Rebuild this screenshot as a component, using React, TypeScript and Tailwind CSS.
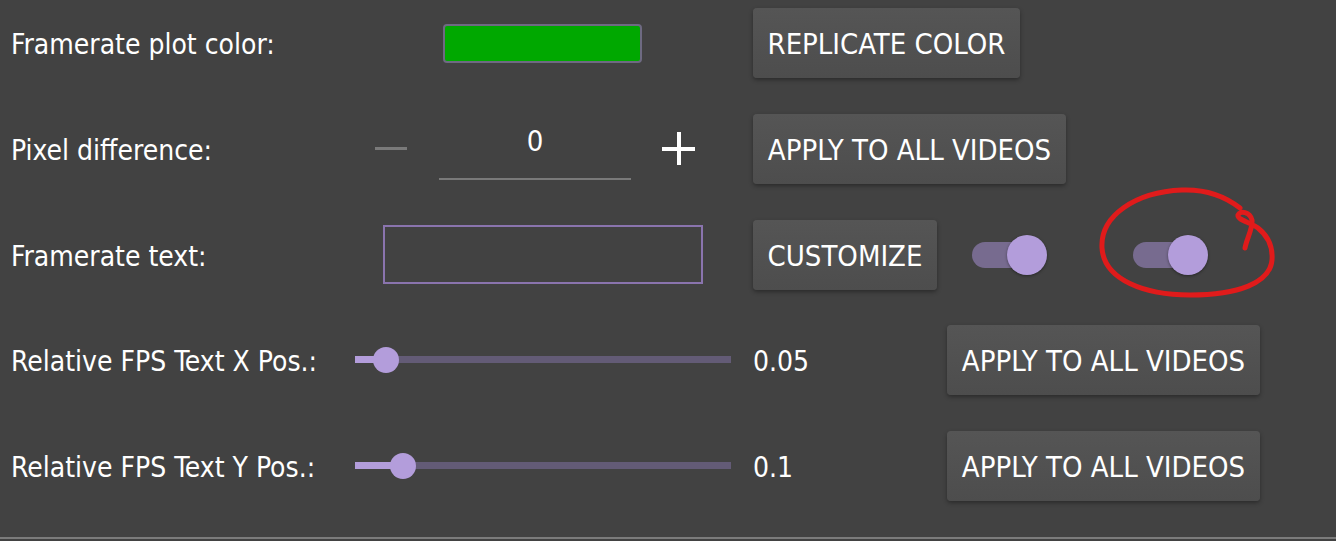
import React from "react";

const font = "font-['DejaVu_Sans_Condensed','DejaVu_Sans',sans-serif] font-stretch-condensed";

function Btn({ w, children }: { w: string; children: React.ReactNode }) {
  return (
    <div
      className={`${w} h-[70px] shrink-0 rounded-[4px] bg-gradient-to-b from-[#555555] to-[#4d4d4d] shadow-[0_2px_4px_rgba(0,0,0,0.35)] flex items-center justify-center pt-[3px] text-white text-[29px] leading-none`}
    >
      {children}
    </div>
  );
}

function Label({ w, children }: { w: string; children: React.ReactNode }) {
  return <div className={`${w} shrink-0 text-white text-[28px] leading-none pt-[4px]`}>{children}</div>;
}

function Toggle({ ml }: { ml: string }) {
  return (
    <div className={`relative ${ml} w-[75px] h-[40px] shrink-0`}>
      <div className="absolute left-0 top-[7px] w-[58px] h-[26px] rounded-full bg-[#776b8f]" />
      <div className="absolute right-0 top-0 w-[40px] h-[40px] rounded-full bg-[#b39ddb] shadow-[0_1px_3px_rgba(0,0,0,0.4)]" />
    </div>
  );
}

function Slider({ value }: { value: number }) {
  const pos = 13 + 350 * value;
  return (
    <div className="relative w-[376px] h-[26px] shrink-0">
      <div className="absolute left-0 right-0 top-[9px] h-[7px] bg-[#635b76]" />
      <div className="absolute left-0 top-[9px] h-[7px] bg-[#b39ddb]" style={{ width: pos }} />
      <div
        className="absolute top-0 w-[26px] h-[26px] rounded-full bg-[#b39ddb]"
        style={{ left: pos - 13 }}
      />
    </div>
  );
}

export default function App() {
  return (
    <div className={`relative w-[1336px] h-[541px] bg-[#424242] overflow-hidden ${font}`}>
      <div className="flex flex-col gap-[35.75px] pt-[8px] pl-[11px]">
        {/* Row 1 */}
        <div className="flex items-center h-[70px]">
          <Label w="w-[432px]">Framerate plot color:</Label>
          <div className="w-[199px] h-[39px] shrink-0 rounded-[4px] border-2 border-[#6e6a82] bg-[#00a800]" />
          <div className="w-[111px] shrink-0" />
          <Btn w="w-[267px]">REPLICATE COLOR</Btn>
        </div>
        {/* Row 2 */}
        <div className="flex items-center h-[70px]">
          <Label w="w-[364px]">Pixel difference:</Label>
          <div className="w-[32px] h-[3px] shrink-0 bg-[#7a7a7a]" />
          <div className="w-[32px] shrink-0" />
          <div className="self-start w-[192px] h-[66px] shrink-0 border-b-2 border-[#7a7a7a] pt-[11px] text-center text-white text-[29px] leading-[32px]">
            0
          </div>
          <div className="w-[31px] shrink-0" />
          <div className="relative w-[33px] h-[33px] shrink-0">
            <div className="absolute left-0 right-0 top-[15px] h-[3.5px] bg-white" />
            <div className="absolute top-0 bottom-0 left-[15px] w-[3.5px] bg-white" />
          </div>
          <div className="w-[58px] shrink-0" />
          <Btn w="w-[313px]">APPLY TO ALL VIDEOS</Btn>
        </div>
        {/* Row 3 */}
        <div className="flex items-center h-[70px]">
          <Label w="w-[372px]">Framerate text:</Label>
          <div className="w-[320px] h-[59px] shrink-0 border-2 border-[#8a74ae]" />
          <div className="w-[50px] shrink-0" />
          <Btn w="w-[184px]">CUSTOMIZE</Btn>
          <Toggle ml="ml-[35px]" />
          <Toggle ml="ml-[86px]" />
        </div>
        {/* Row 4 */}
        <div className="flex items-center h-[70px]">
          <Label w="w-[344px]">Relative FPS Text X Pos.:</Label>
          <Slider value={0.05} />
          <div className="w-[22px] shrink-0" />
          <div className="w-[194px] shrink-0 text-white text-[28px] leading-none pt-[4px]">0.05</div>
          <Btn w="w-[313px]">APPLY TO ALL VIDEOS</Btn>
        </div>
        {/* Row 5 */}
        <div className="flex items-center h-[70px]">
          <Label w="w-[344px]">Relative FPS Text Y Pos.:</Label>
          <Slider value={0.1} />
          <div className="w-[22px] shrink-0" />
          <div className="w-[194px] shrink-0 text-white text-[28px] leading-none pt-[4px]">0.1</div>
          <Btn w="w-[313px]">APPLY TO ALL VIDEOS</Btn>
        </div>
      </div>

      {/* bottom divider */}
      <div className="absolute left-0 right-0 top-[537px] h-[2px] bg-[#7b7b7b]" />

      {/* red hand-drawn annotation */}
      <svg className="absolute left-[1090px] top-[180px]" width="200" height="125" viewBox="0 0 200 125" fill="none">
        <path
          d="M155,68 C157,58 163,48 162,40 C160,32 150,30 148,35 C147,40 160,42 168,48 C178,56 183,66 182,80 C180,103 148,115 100,115 C55,115 14,100 12,68 C10,36 45,12 92,10 C117,9 136,17 150,28"
          stroke="#e01b1b"
          strokeWidth="5"
          strokeLinecap="round"
          strokeLinejoin="round"
        />
      </svg>
    </div>
  );
}
